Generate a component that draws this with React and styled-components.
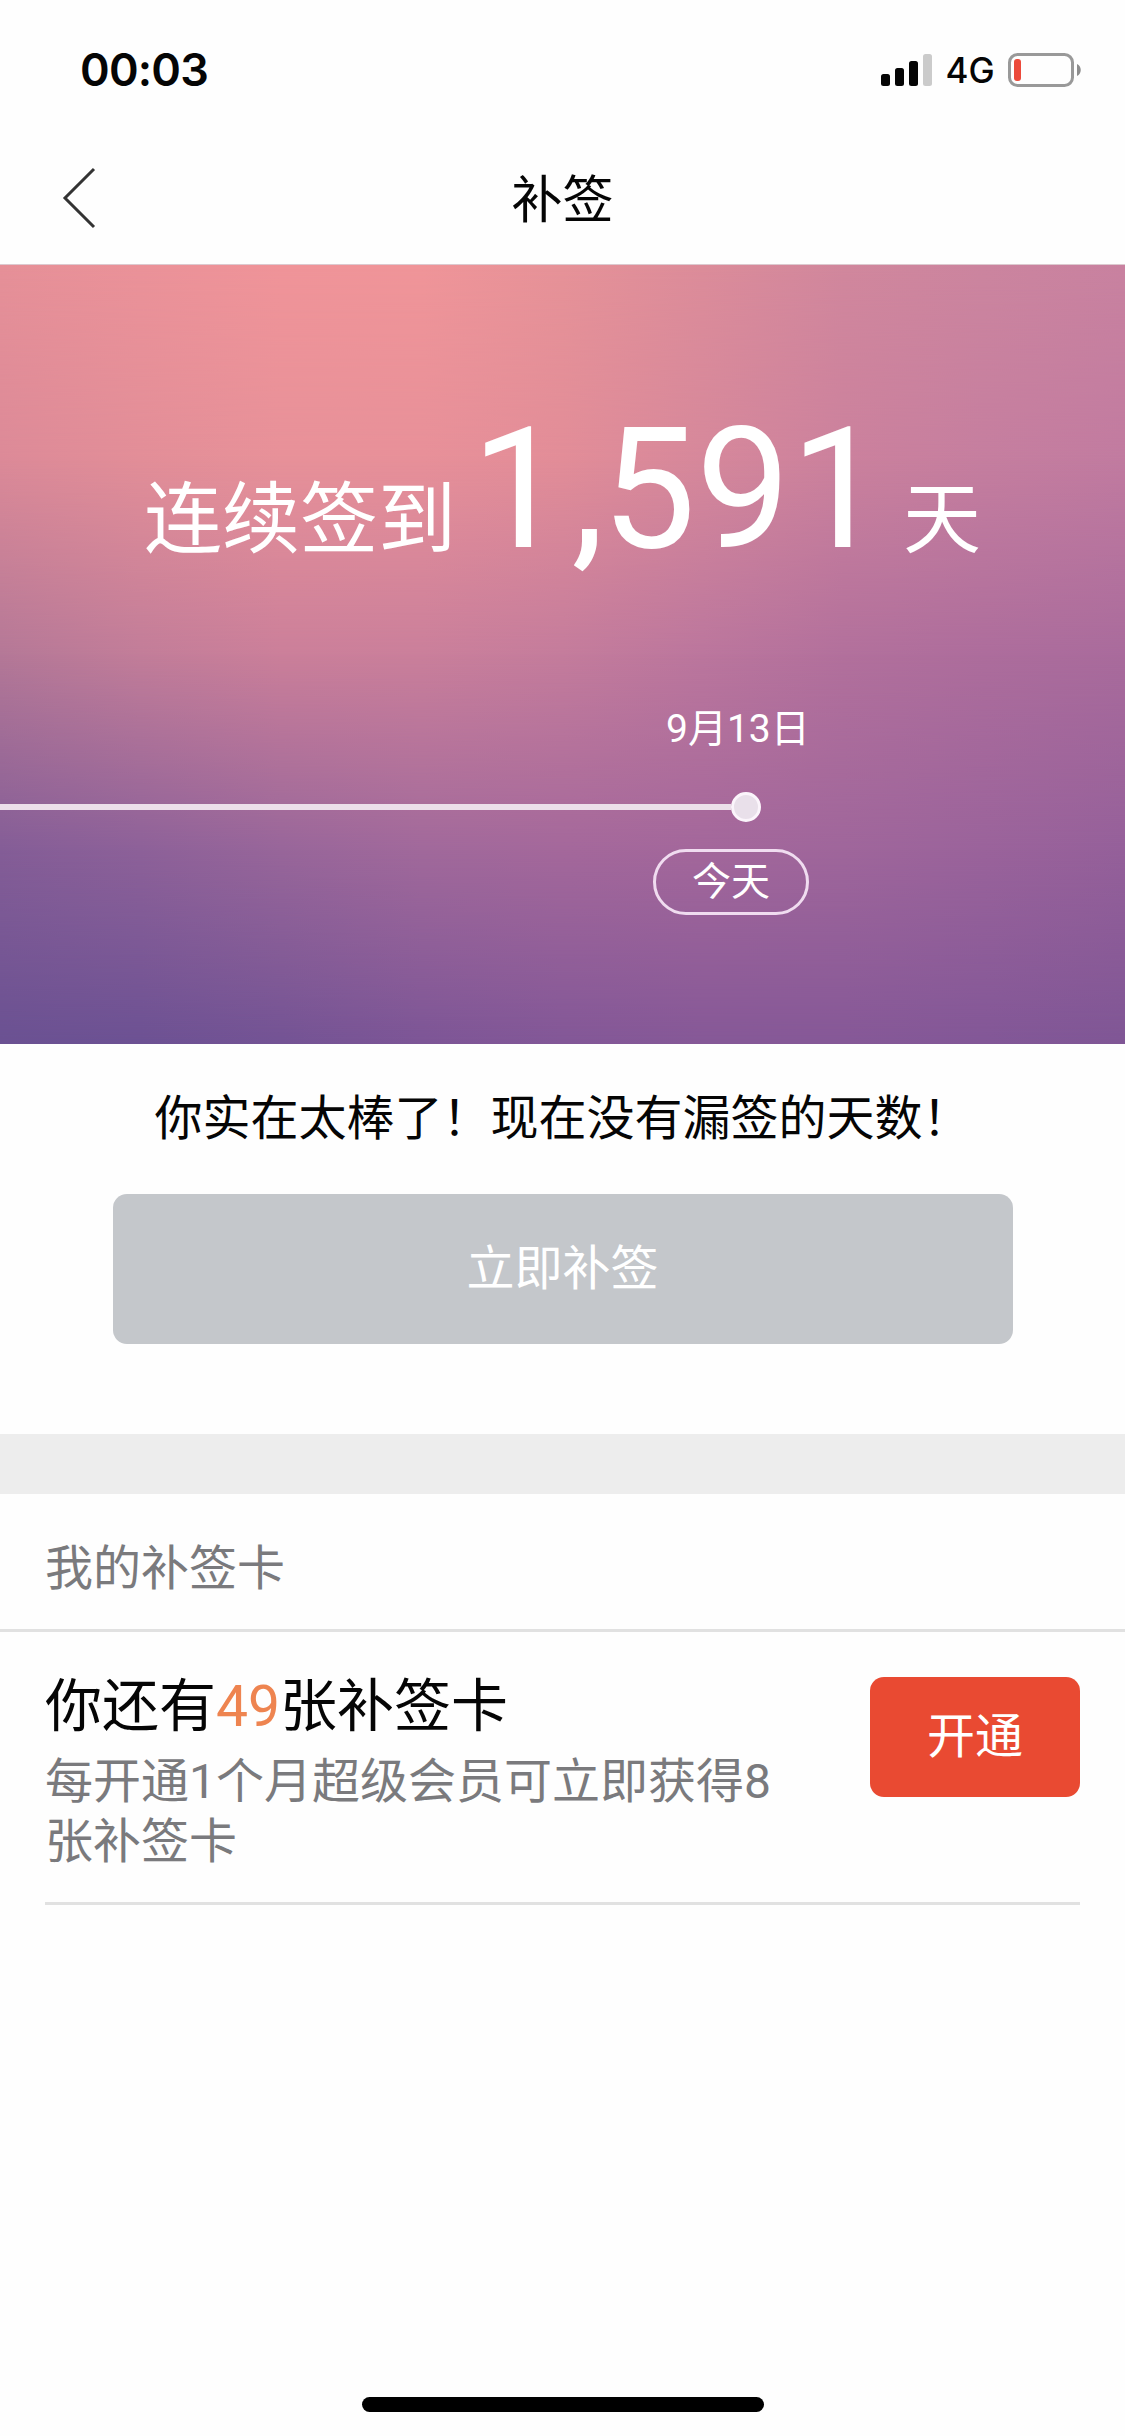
import React from "react";
import styled, { createGlobalStyle } from "styled-components";

const GlobalStyle = createGlobalStyle`
  * {
    box-sizing: border-box;
  }
  body {
    margin: 0;
    background: #fefefe;
    font-family: Roboto, "Noto Sans CJK SC", sans-serif;
    color: #050505;
  }
  button {
    font-family: inherit;
    border: none;
    padding: 0;
  }
`;

// one horizontal gradient per row, every row fades into the next one
const skyRows = [
    ["#e69098", "#eb9299", "#f09499", "#f09599", "#e69298", "#dc8c9a", "#d1879d", "#cc859f", "#c982a0"],
    ["#dc8a98", "#e28e98", "#e79199", "#e79099", "#e28d98", "#d6889b", "#cb819d", "#c57e9f", "#c17ba0"],
    ["#b47897", "#c27d99", "#cb7f9a", "#ca7f9b", "#c47c9c", "#bb769d", "#b2709c", "#ad6d9c", "#a96b9c"],
    ["#845d97", "#8d6199", "#98669a", "#a1699b", "#a4689b", "#a3679b", "#9f669b", "#9a639b", "#95609a"],
    ["#6a5192", "#6c5193", "#735394", "#7c5596", "#825797", "#855897", "#855897", "#825797", "#7f5695"],
];

export default function App() {
    return (
        <>
            <GlobalStyle />
            <Screen lang="zh-CN">
                <StatusBar>
                    <Clock>00:03</Clock>
                    <StatusIcons>
                        <SignalIcon />
                        <Network>4G</Network>
                        <BatteryIcon />
                    </StatusIcons>
                </StatusBar>
                <NavBar>
                    <BackButton aria-label="返回">
                        <svg width="36" height="64" viewBox="0 0 36 64" fill="none" stroke="#333" strokeWidth="3">
                            <path d="M33 3L4 32L33 61" />
                        </svg>
                    </BackButton>
                    <NavTitle>补签</NavTitle>
                </NavBar>
                <Hero>
                    {skyRows.map((colors, index) => (
                        <SkyRow key={index} $colors={colors} $index={index} />
                    ))}
                    <Streak>
                        连续签到
                        <StreakCount>
                            1<Comma>,</Comma>591
                        </StreakCount>
                        天
                    </Streak>
                    <Timeline>
                        <DateLabel>9月13日</DateLabel>
                        <Track>
                            <TrackLine />
                            <TrackDot />
                        </Track>
                        <TodayPill>今天</TodayPill>
                    </Timeline>
                </Hero>
                <Resign>
                    <ResignText>你实在太棒了！现在没有漏签的天数！</ResignText>
                    <ResignButton disabled>立即补签</ResignButton>
                </Resign>
                <Divider />
                <SectionTitle>我的补签卡</SectionTitle>
                <CardRow>
                    <CardInfo>
                        <CardTitle>
                            你还有<em>49</em>张补签卡
                        </CardTitle>
                        <CardDesc>每开通1个月超级会员可立即获得8张补签卡</CardDesc>
                    </CardInfo>
                    <OpenButton>开通</OpenButton>
                </CardRow>
                <HomeIndicator />
            </Screen>
        </>
    );
}

function SignalIcon() {
    return (
        <svg width="51" height="34" viewBox="0 0 51 34">
            <rect x="0" y="21" width="9" height="12" rx="2.5" fill="#050505" />
            <rect x="14" y="15" width="9" height="18" rx="2.5" fill="#050505" />
            <rect x="28" y="8" width="9" height="25" rx="2.5" fill="#050505" />
            <rect x="42" y="1" width="9" height="32" rx="2.5" fill="#cbcbcb" />
        </svg>
    );
}

function BatteryIcon() {
    return (
        <svg width="74" height="34" viewBox="0 0 74 34">
            <rect x="1.5" y="1.5" width="63" height="31" rx="8" fill="none" stroke="#999" strokeWidth="3" />
            <rect x="6" y="6" width="7" height="22" rx="3" fill="#ec4a3b" />
            <path d="M69 11C74 13 74 21 69 23Z" fill="#8d8d8d" />
        </svg>
    );
}

const Screen = styled.div`
  width: 1125px;
  height: 2436px;
  display: flex;
  flex-direction: column;
  overflow: hidden;
  background: #fefefe;
`;

const StatusBar = styled.div`
  height: 132px;
  padding: 52px 43px 0 80px;
  display: flex;
  justify-content: space-between;
  align-items: flex-start;
`;

const Clock = styled.div`
  font: 600 45px/35px Inter, sans-serif;
  letter-spacing: -0.8px;
`;

const StatusIcons = styled.div`
  display: flex;
  align-items: center;
  svg {
    display: block;
  }
`;

const Network = styled.span`
  width: 76px;
  padding-top: 1px;
  text-align: center;
  font: 450 35px/34px Inter, sans-serif;
`;

const NavBar = styled.div`
  height: 132px;
  padding: 0 61px;
  display: grid;
  grid-template-columns: 100px 1fr 100px;
  align-items: center;
`;

const BackButton = styled.button`
  background: none;
  width: 36px;
  height: 64px;
  svg {
    display: block;
  }
`;

const NavTitle = styled.h1`
  margin: 0;
  padding-top: 5px;
  text-align: center;
  font-size: 51px;
  font-weight: 400;
  line-height: 60px;
`;

const Hero = styled.section`
  position: relative;
  height: 780px;
  border-top: 1px solid #dcc9cf;
  color: #fff;
  isolation: isolate;
`;

const SkyRow = styled.div`
  position: absolute;
  inset: 0;
  z-index: -1;
  background: linear-gradient(90deg, ${({ $colors }) => $colors.join(", ")});
  mask-image: ${({ $index }) =>
      $index === 0
          ? "none"
          : `linear-gradient(180deg, transparent ${($index - 1) * 25}%, #000 ${$index * 25}%)`};
`;

const Streak = styled.div`
  height: 445px;
  padding-top: 130px;
  display: flex;
  justify-content: center;
  align-items: baseline;
  font-size: 78px;
  line-height: 190px;
`;

const StreakCount = styled.span`
  margin: 0 18px 0 15px;
  font-size: 168px;
`;

const Comma = styled.span`
  margin: 0 -3px 0 6px;
`;

const Timeline = styled.div`
  display: flex;
  flex-direction: column;
`;

const DateLabel = styled.div`
  margin-left: 666px;
  height: 82px;
  font-size: 39px;
  line-height: 38px;
`;

const Track = styled.div`
  display: flex;
  align-items: center;
  height: 30px;
`;

const TrackLine = styled.div`
  width: 731px;
  height: 6px;
  background: #ecdfea;
`;

const TrackDot = styled.div`
  width: 30px;
  height: 30px;
  border: 3px solid #fbf5fb;
  border-radius: 50%;
  background: #e9e0ea;
`;

const TodayPill = styled.div`
  margin: 27px 0 0 653px;
  width: 156px;
  height: 66px;
  border: 3px solid #f0dcf0;
  border-radius: 33px;
  text-align: center;
  font-size: 39px;
  line-height: 60px;
`;

const Resign = styled.section`
  height: 390px;
  padding-top: 45px;
  display: flex;
  flex-direction: column;
  align-items: center;
`;

const ResignText = styled.p`
  margin: 0 0 45px;
  font-size: 48px;
  line-height: 60px;
`;

const ResignButton = styled.button`
  width: 900px;
  height: 150px;
  border-radius: 14px;
  background: #c4c7cb;
  color: #fff;
  font-size: 48px;
  line-height: 48px;
`;

const Divider = styled.div`
  height: 60px;
  background: #ededed;
`;

const SectionTitle = styled.h2`
  margin: 0;
  height: 138px;
  padding-left: 45px;
  border-bottom: 3px solid #e1e1e1;
  color: #7a7a7d;
  font-size: 48px;
  font-weight: 400;
  line-height: 149px;
`;

const CardRow = styled.div`
  margin: 0 45px;
  height: 273px;
  padding-top: 45px;
  display: flex;
  justify-content: space-between;
  align-items: flex-start;
  border-bottom: 3px solid #e1e1e1;
`;

const CardInfo = styled.div`
  width: 740px;
`;

const CardTitle = styled.div`
  font-size: 57px;
  line-height: 60px;
  em {
    font-style: normal;
    color: #ee8450;
  }
`;

const CardDesc = styled.div`
  margin-top: 15px;
  color: #7a7a7d;
  font-size: 48px;
  line-height: 60px;
`;

const OpenButton = styled.button`
  width: 210px;
  height: 120px;
  border-radius: 14px;
  background: #e94a32;
  color: #fff;
  font-size: 48px;
  line-height: 48px;
`;

const HomeIndicator = styled.div`
  width: 402px;
  height: 15px;
  margin: auto auto 24px;
  border-radius: 8px;
  background: #000;
`;
